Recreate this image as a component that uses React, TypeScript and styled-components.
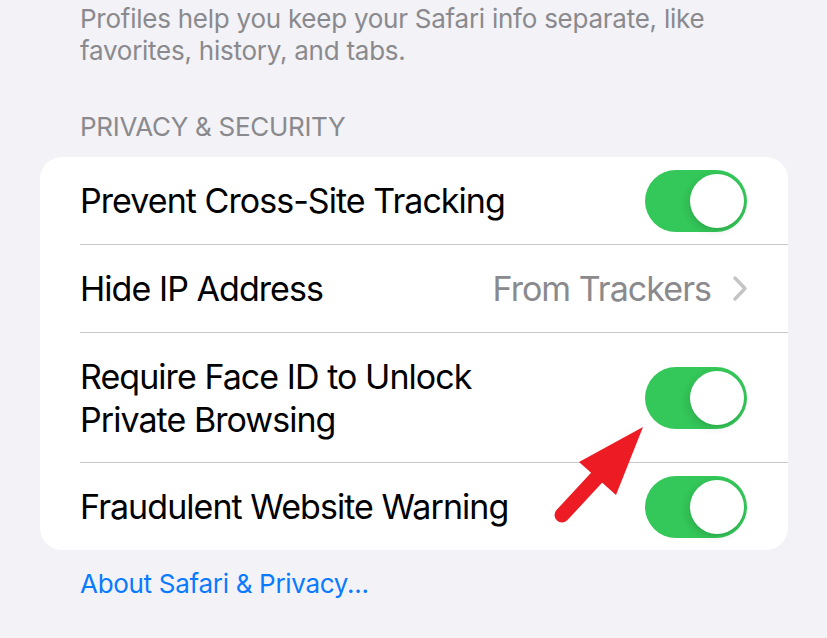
import React from "react";
import styled, { createGlobalStyle } from "styled-components";

const Global = createGlobalStyle`
  html, body { margin: 0; padding: 0; background: #f2f2f7; }
  body { font-family: Inter, "Noto Sans", "Liberation Sans", sans-serif; -webkit-font-smoothing: antialiased; }
`;

const Page = styled.div`
  position: relative;
  width: 827px;
  height: 638px;
  overflow: hidden;
  background: #f2f2f7;
  display: flex;
  flex-direction: column;
`;

const FootNote = styled.p`
  margin: 0;
  padding: 3px 40px 0 80px;
  font-size: 26px;
  line-height: 32px;
  color: #8a8a8e;
  letter-spacing: -0.25px;
`;

const SectionHeader = styled.h2`
  margin: 44px 0 14px;
  padding-left: 80px;
  font-size: 26px;
  line-height: 32px;
  font-weight: 400;
  color: #8a8a8e;
  letter-spacing: -0.3px;
`;

const Card = styled.div`
  margin: 0 39px 0 40px;
  background: #ffffff;
  border-radius: 22px;
  overflow: hidden;
`;

const Row = styled.div`
  padding-left: 40px;
`;

const RowInner = styled.div<{ $first?: boolean; $tall?: boolean }>`
  display: flex;
  align-items: center;
  justify-content: space-between;
  height: ${(p) => (p.$tall ? 129 : 87)}px;
  padding-right: 41px;
  border-top: ${(p) => (p.$first ? "none" : "1px solid #c8c8cc")};
`;

const Label = styled.span`
  font-size: 34px;
  line-height: 43px;
  color: #000;
  letter-spacing: -0.95px;
`;

const Accessory = styled.span`
  display: flex;
  align-items: center;
  gap: 22px;
`;

const Value = styled.span`
  font-size: 34px;
  line-height: 43px;
  color: #8a8a8e;
  letter-spacing: -0.95px;
`;

const Switch = styled.span`
  position: relative;
  display: block;
  width: 102px;
  height: 62px;
  border-radius: 31px;
  background: #34c759;
  flex-shrink: 0;
`;

const Knob = styled.span`
  position: absolute;
  top: 4px;
  right: 3px;
  width: 54px;
  height: 54px;
  border-radius: 50%;
  background: #fff;
  box-shadow: -2px 3px 8px rgba(0, 0, 0, 0.12), 0 2px 1px rgba(0, 0, 0, 0.04);
`;

const Link = styled.a`
  margin: 18px 0 0 80px;
  font-size: 26px;
  line-height: 32px;
  color: #0a7aff;
  text-decoration: none;
  letter-spacing: -0.3px;
  align-self: flex-start;
`;

const ArrowLayer = styled.svg`
  position: absolute;
  left: 0;
  top: 0;
  pointer-events: none;
`;

const Toggle = () => (
  <Switch>
    <Knob />
  </Switch>
);

const Chevron = () => (
  <svg width="14" height="25" viewBox="0 0 14 25">
    <polyline
      points="2,2 12,12.5 2,23"
      fill="none"
      stroke="#c4c4c7"
      strokeWidth="3.4"
      strokeLinecap="round"
      strokeLinejoin="round"
    />
  </svg>
);

export default function App() {
  return (
    <>
      <Global />
      <Page>
        <FootNote>
          Profiles help you keep your Safari info separate, like
          <br />
          favorites, history, and tabs.
        </FootNote>
        <SectionHeader>PRIVACY &amp; SECURITY</SectionHeader>
        <Card>
          <Row>
            <RowInner $first>
              <Label>Prevent Cross-Site Tracking</Label>
              <Toggle />
            </RowInner>
          </Row>
          <Row>
            <RowInner>
              <Label>Hide IP Address</Label>
              <Accessory>
                <Value>From Trackers</Value>
                <Chevron />
              </Accessory>
            </RowInner>
          </Row>
          <Row>
            <RowInner $tall>
              <Label>
                Require Face ID to Unlock
                <br />
                Private Browsing
              </Label>
              <Toggle />
            </RowInner>
          </Row>
          <Row>
            <RowInner>
              <Label>Fraudulent Website Warning</Label>
              <Toggle />
            </RowInner>
          </Row>
        </Card>
        <Link href="#">About Safari &amp; Privacy...</Link>
        <ArrowLayer width="827" height="638" viewBox="0 0 827 638">
          <line x1="562" y1="515" x2="600" y2="474" stroke="#ed1c24" strokeWidth="15" strokeLinecap="round" />
          <polygon points="643,427 579,462 616,495" fill="#ed1c24" />
        </ArrowLayer>
      </Page>
    </>
  );
}
